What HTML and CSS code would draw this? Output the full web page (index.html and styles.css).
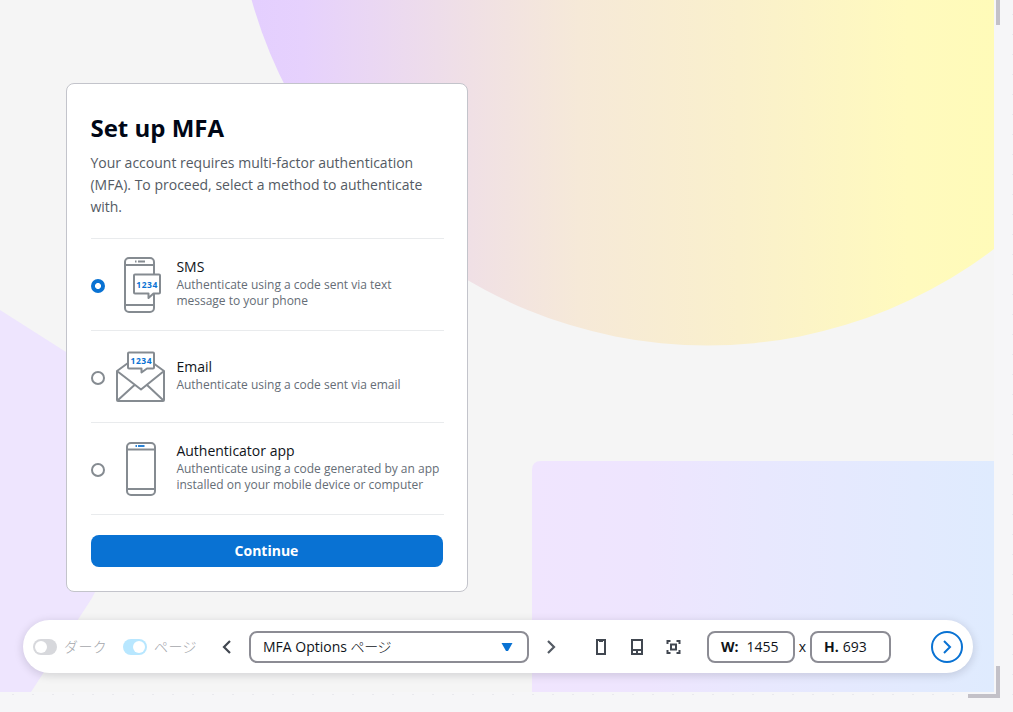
FILE: index.html
```html
<!DOCTYPE html>
<html lang="ja">
<head>
<meta charset="utf-8">
<title>MFA Options</title>
<link rel="stylesheet" href="styles.css">
</head>
<body>
<main class="stage">
  <svg class="backdrop" width="1013" height="712" viewBox="0 0 1013 712" aria-hidden="true">
    <defs>
      <linearGradient id="sun" gradientUnits="userSpaceOnUse" x1="234" y1="0" x2="1000" y2="0">
        <stop offset="0" stop-color="#e3ceff"/><stop offset=".09" stop-color="#e6d1fd"/><stop offset=".31" stop-color="#f0e0e5"/><stop offset=".45" stop-color="#f6e9d8"/><stop offset=".66" stop-color="#faf0cc"/><stop offset=".88" stop-color="#fffabe"/><stop offset="1" stop-color="#fffbb8"/>
      </linearGradient>
      <linearGradient id="sky"><stop offset="0" stop-color="#f0e5fe"/><stop offset=".25" stop-color="#eee5fe"/><stop offset=".5" stop-color="#e8e8fe"/><stop offset="1" stop-color="#dfebfe"/></linearGradient>
      <pattern id="dots" x="13" y="14" width="20" height="20" patternUnits="userSpaceOnUse"><path fill="#e9e9ee" d="M0 0h1v1H0z"/><path fill="#e9e9ee" d="M19 0h1v1h-1z"/></pattern>
      <clipPath id="frame"><path d="M0 0h994v692H0z"/></clipPath>
    </defs>
    <path fill="#f6f6f8" d="M0 0h1013v712H0z"/>
    <path fill="url(#dots)" d="M1003 0h10v712h-10zM0 694h1013v18H0z"/>
    <path fill="#f5f5f5" d="M0 0h994v692H0z"/>
    <g clip-path="url(#frame)">
      <circle cx="707.500" cy="-128" r="473.500" fill="url(#sun)"/>
      <path fill="#eee5fe" d="M0 310l66 42 54 34-8 160q-8 30-20 52L31 692H0z"/>
      <path fill="url(#sky)" d="M532 692V470q0-9 9-9h453v231z"/>
    </g>
    <path fill="#c3c1c8" d="M996 0h4v25h-4zM996 666h4v32h-32v-4h28z"/>
  </svg>

  <section class="card">
    <h1 class="title">Set up MFA</h1>
    <p class="intro">Your account requires multi-factor authentication (MFA). To proceed, select a method to authenticate with.</p>
    <div class="options">
      <label class="option">
        <span class="radio radio-on"></span>
        <svg class="art" width="52" height="60" viewBox="0 0 52 60" fill="none" stroke="#858b91" stroke-width="2">
          <rect x="10" y="3" width="29" height="54" rx="4"/><path d="M10 10h29M10 50h29"/><path d="M20 6.500h1.500M23 6.500h7"/>
          <path fill="#fff" stroke-linejoin="round" d="M20 19.500h24q1 0 1 1v17q0 1-1 1h-5.500l-5 4.500v-4.500H20q-1 0-1-1v-17q0-1 1-1z"/>
          <text class="code" x="21.300" y="33" textLength="21">1234</text>
        </svg>
        <span class="copy"><span class="name">SMS</span><span class="hint">Authenticate using a code sent via text message to your phone</span></span>
      </label>
      <label class="option">
        <span class="radio"></span>
        <svg class="art" width="52" height="60" viewBox="0 0 52 60" fill="none" stroke="#858b91" stroke-width="2" stroke-linejoin="round">
          <g transform="translate(0 1)">
            <path d="M13 15L2 23v29q0 1 1 1h45q1 0 1-1V23L38 15M2 23l24 18.500L49 23M2.500 52.500L19.500 37M48.500 52.500L32 37"/>
            <path fill="#fff" d="M14 4.500h24q1 0 1 1v14q0 1-1 1h-6l-5.500 4v-4H14q-1 0-1-1v-14q0-1 1-1z"/>
            <text class="code" x="15.500" y="16" textLength="21">1234</text>
          </g>
        </svg>
        <span class="copy"><span class="name">Email</span><span class="hint">Authenticate using a code sent via email</span></span>
      </label>
      <label class="option">
        <span class="radio"></span>
        <svg class="art" width="52" height="60" viewBox="0 0 52 60" fill="none" stroke="#858b91" stroke-width="2">
          <rect x="12" y="4" width="28" height="52" rx="4"/><path d="M12 10.500h28M12 50h28"/><path stroke="#2b82d4" d="M20.500 7H22M23 7h6.500"/>
        </svg>
        <span class="copy"><span class="name">Authenticator app</span><span class="hint">Authenticate using a code generated by an app installed on your mobile device or computer</span></span>
      </label>
    </div>
    <button class="continue">Continue</button>
  </section>

  <nav class="toolbar">
    <span class="switch"></span><span class="switch-name dark-name">ダーク</span>
    <span class="switch switch-on"></span><span class="switch-name">ページ</span>
    <svg class="prev" width="12" height="16" viewBox="0 0 12 16" fill="none" stroke="#414750" stroke-width="2.200"><path d="M9 2L3 8l6 6"/></svg>
    <div class="select"><span class="choice">MFA Options <span class="kana">ページ</span></span><svg width="12" height="10" viewBox="0 0 12 10"><path fill="#0972d3" d="M.5 1h11L7 9H5z"/></svg></div>
    <svg class="next" width="12" height="16" viewBox="0 0 12 16" fill="none" stroke="#545b64" stroke-width="2.200"><path d="M3 2l6 6-6 6"/></svg>
    <svg class="devices" width="90" height="20" viewBox="0 0 90 20" fill="none" stroke="#414750" stroke-width="2">
      <rect x="2" y="3" width="8" height="14"/><path stroke-width="1" d="M4 4.500h4"/>
      <rect x="37" y="3" width="10" height="14"/><path d="M37 13h10M42 14v2"/>
      <path stroke-width="2" d="M72.500 7V4h3M81.500 4h3v3M84.500 13v3h-3M75.500 16h-3v-3"/><rect stroke-width="2" x="76" y="7.500" width="5" height="5"/>
    </svg>
    <div class="size size-w"><b>W:</b><span>1455</span></div>
    <span class="by">x</span>
    <div class="size size-h"><b>H.</b><span>693</span></div>
    <svg class="go" width="34" height="34" viewBox="0 0 34 34" fill="none" stroke="#0972d3" stroke-width="2"><circle cx="17" cy="17" r="15"/><path d="M14 11l6 6-6 6"/></svg>
  </nav>
</main>
</body>
</html>
```

FILE: styles.css
```css
* { box-sizing: border-box; }
body { margin: 0; font-family: "Open Sans", "Noto Sans CJK JP", sans-serif; color: #0f141a; }
.stage { position: relative; width: 1013px; height: 712px; overflow: hidden; display: flex; flex-direction: column; align-items: flex-start; }
.backdrop { position: absolute; inset: 0; }
.card { position: relative; width: 402px; height: 509px; margin: 83px 0 0 66px; padding: 28px 23px 24px 24px; background: #fff; border: 1px solid #c3c4cb; border-radius: 8px; display: flex; flex-direction: column; }
.title { margin: 0 0 0 -.6px; font-size: 24px; line-height: 32px; font-weight: 700; color: #000716; }
.intro { margin: 8px 0 20px -.6px; font-size: 14px; line-height: 22px; color: #545b64; }
.options { border-top: 1px solid #e9ebed; }
.option { height: 92px; display: flex; align-items: center; border-bottom: 1px solid #e9ebed; }
.radio { width: 14px; height: 14px; border: 2px solid #858b91; border-radius: 50%; margin-top: 3px; flex: none; }
.radio-on { border: 0; background: radial-gradient(circle, #fff 2.600px, #0972d3 3.400px); }
.art { flex: none; margin-left: 10px; margin-right: 9.400px; }
.code { font-size: 8.500px; font-weight: 700; fill: #0972d3; stroke: none; }
.copy { display: flex; flex-direction: column; max-width: 265px; padding-bottom: 3px; }
.name { font-size: 14px; line-height: 20px; }
.hint { font-size: 12px; line-height: 16px; color: #656d76; }
.continue { margin: 20px 1px 0 0; padding: 0 7px 0 6px; height: 32px; border: 0; border-radius: 8px; background: #0972d3; color: #fff; font: 700 14px/22px "Open Sans", sans-serif; }
.toolbar { position: relative; display: flex; align-items: center; width: 950px; height: 53px; margin: 28px 0 0 23px; padding: 1px 10px 0; border-radius: 27px; background: #fff; box-shadow: 0 2px 8px 1px rgba(0,7,22,.13); font-size: 14px; }
.toolbar > * { flex: none; }
.switch { width: 24px; height: 16px; padding: 2px; border-radius: 8px; background: #d7d8dc; }
.switch::before { content: ""; display: block; width: 12px; height: 12px; border-radius: 50%; background: #fff; }
.switch-on { background: #b8e7ff; }
.switch-on::before { margin-left: 8px; }
.switch-name { width: 44px; margin-left: 7px; margin-right: 23px; padding-bottom: 2px; font-family: "Noto Sans CJK JP", sans-serif; font-weight: 300; line-height: 20px; color: #a5a7ac; letter-spacing: .4px; white-space: nowrap; }
.dark-name { margin-right: 15px; }
.select { width: 280px; height: 32px; margin-left: 16px; padding: 0 14px 0 12px; border: 2px solid #8c8c94; border-radius: 8px; display: flex; align-items: center; justify-content: space-between; line-height: 20px; }
.choice { padding-bottom: 2px; }
.kana { font-family: "Noto Sans CJK JP", sans-serif; font-weight: 300; letter-spacing: -.4px; }
.next { margin-left: 16px; }
.devices { margin-left: 38px; }
.size { height: 32px; display: flex; align-items: center; border: 2px solid #8c8c94; border-radius: 8px; line-height: 20px; }
.size-w { width: 88px; gap: 8px; margin-left: 22px; padding-left: 12px; }
.by { width: 15px; padding-bottom: 1px; text-align: center; }
.size-h { width: 81px; gap: 4px; padding-left: 12px; }
.go { margin-left: 39px; }
```
